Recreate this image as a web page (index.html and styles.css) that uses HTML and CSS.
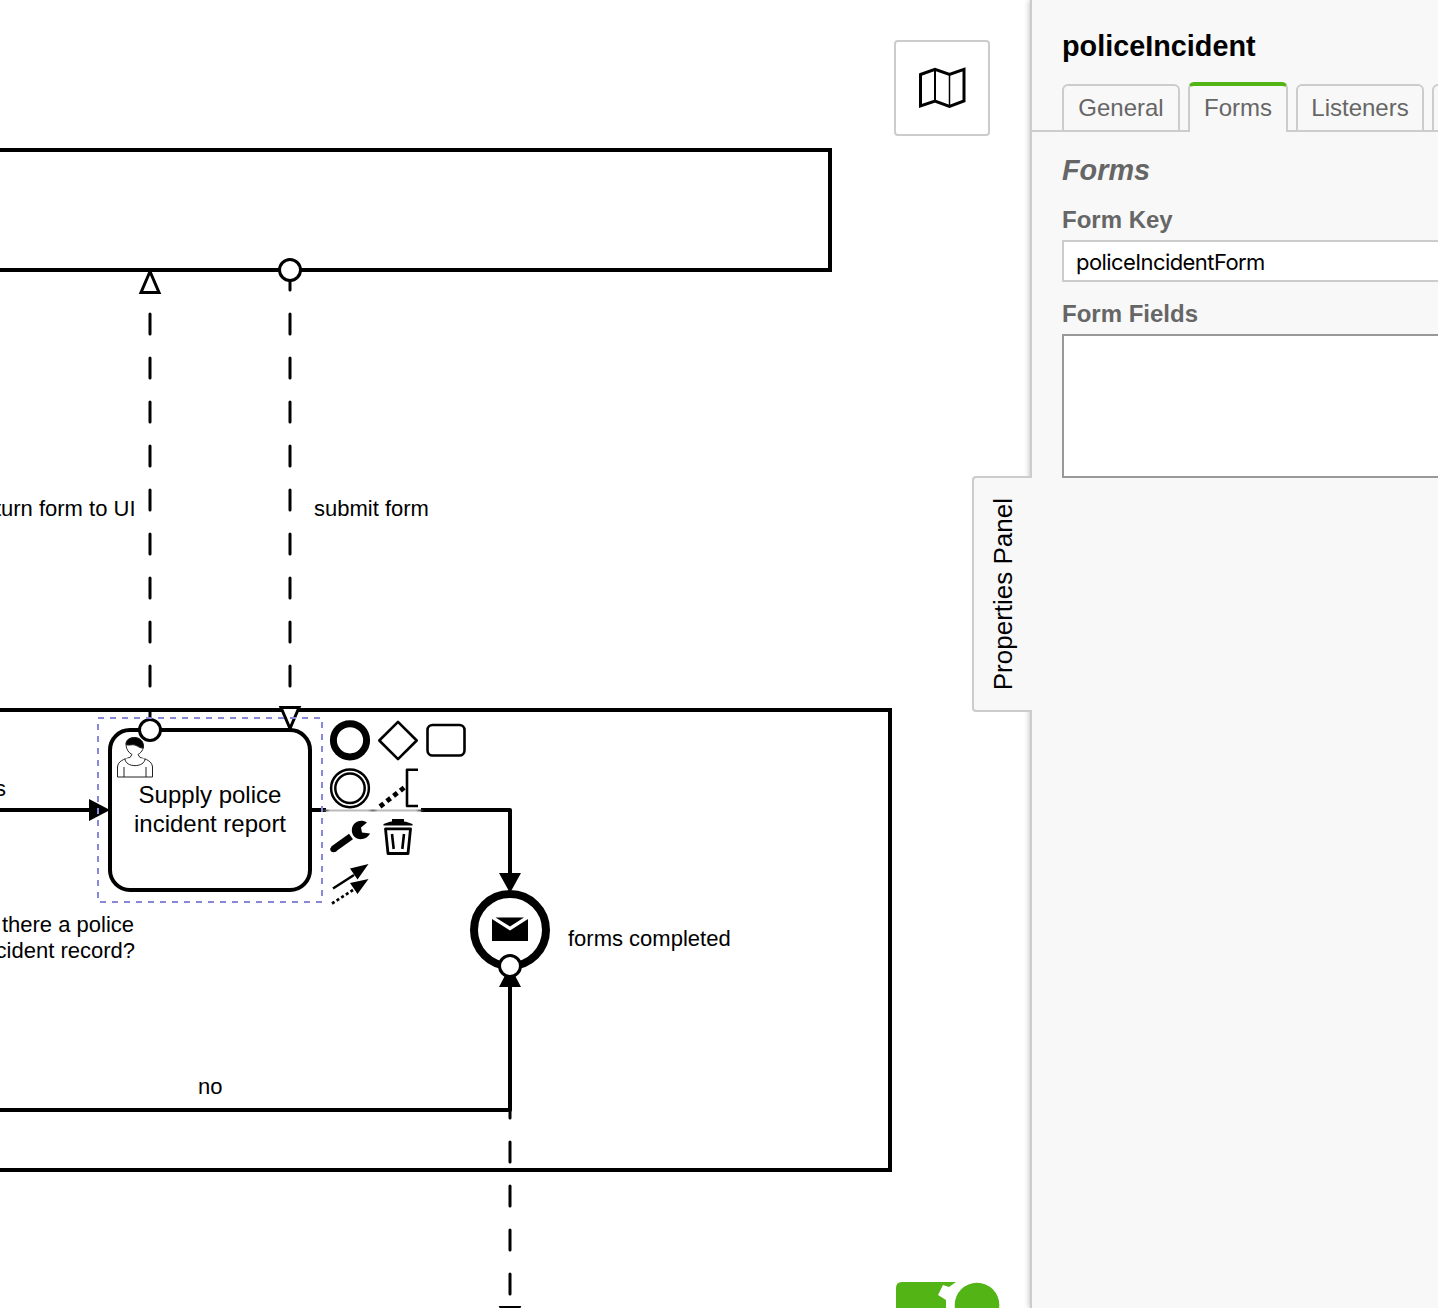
FILE: index.html
```html
<!DOCTYPE html>
<html lang="en">
<head>
<meta charset="utf-8">
<title>policeIncident</title>
<link rel="stylesheet" href="styles.css">
</head>
<body>
<div class="modeler">
  <main class="canvas">
    <svg class="diagram" width="1030" height="1308" viewBox="0 0 1030 1308">
      <defs>
        <linearGradient id="pad-line" gradientUnits="userSpaceOnUse" x1="322" x2="424" y1="0" y2="0">
          <stop offset="0" stop-color="#000"/><stop offset=".08" stop-color="#bbb"/>
          <stop offset=".45" stop-color="#bbb"/><stop offset=".5" stop-color="#666"/>
          <stop offset=".55" stop-color="#bbb"/><stop offset=".92" stop-color="#bbb"/><stop offset="1" stop-color="#000"/>
        </linearGradient>
      </defs>

      <!-- pools -->
      <g class="shape">
        <path d="M-10 150H830V270H-10M-10 710H890V1170H-10"/>
      </g>

      <!-- task and end event -->
      <rect class="shape" x="110" y="730" width="200" height="160" rx="20"/>
      <circle class="end-event" cx="510" cy="930" r="36"/>
      <path d="M495.500 917.500H524L510 926.500zM492 919L510 930.500L528 919V941H492z"/>
      <g class="user">
        <path d="M130 757.500L132 754.500C125 751 124.500 741 129 739C134 736.500 140 738 142 742C145 748 142 752 138 754.500L140 757.500C146 759 152 761 152.500 767V777H117.500V767C118 761 124 759 130 757.500z"/>
        <path d="M125 758.500C125 768 145 768 145 758.500M124 767V777M146 767V777"/>
        <path class="solid" d="M126 744.500C126 739 131 737.500 135 737.500C141 738 144 742 143.500 748C140 748.500 138 746 135 745C132 744 128 746 126 744.500z"/>
      </g>

      <!-- sequence flows -->
      <path class="flow" d="M-10 810H94M310 810H510V880M-10 1110H510V985"/>
      <path d="M89 799L110 810L89 821zM499 873H521L510 893zM499 987H521L510 966z"/>
      <path class="pad-gap" d="M326 810H421"/>
      <path d="M322 809.500H424V811.500H322z" fill="url(#pad-line)"/>

      <!-- message flows -->
      <path class="message" d="M150 730V270M290 270V730M510 966V1308"/>
      <g class="marker">
        <path d="M150 271.500L141 292.500H159zM281 707.500H299L290 728.500zM501 1307.500H519L510 1328z"/>
        <circle cx="290" cy="270" r="10.500"/><circle cx="150" cy="730" r="10.500"/><circle cx="510" cy="966" r="10.500"/>
      </g>
      <rect class="outline" x="98" y="718" width="224" height="184"/>

      <g class="label">
        <text x="135.500" y="516" text-anchor="end">return form to UI</text>
        <text x="314" y="516">submit form</text>
        <text x="6" y="796" text-anchor="end">yes</text>
        <text x="134" y="932" text-anchor="end">Is there a police</text>
        <text x="135" y="958" text-anchor="end">incident record?</text>
        <text x="198" y="1094">no</text>
        <text x="568" y="946">forms completed</text>
        <text class="task" x="210" y="803" text-anchor="middle">Supply police</text>
        <text class="task" x="210" y="832" text-anchor="middle">incident report</text>
      </g>

      <!-- context pad -->
      <g class="pad">
        <circle cx="350" cy="740.300" r="16.600" stroke-width="7"/>
        <path d="M398 721.800L416.700 740.500L398 759.200L379.300 740.500z" stroke-width="2.600"/>
        <rect x="427.500" y="725" width="37" height="30.500" rx="5" stroke-width="2.600"/>
        <circle cx="350" cy="788.300" r="18.900" stroke-width="2.500"/>
        <circle cx="350" cy="788.300" r="14.700" stroke-width="2.500"/>
        <path d="M418 769.700H407V806H418" stroke-width="2.600"/>
        <path d="M380 806.500L405 787" stroke-width="4.800" stroke-dasharray="4.800 3.800"/>
        <path d="M333.500 849L351 836.500" stroke-width="6.600"/>
        <path d="M330.200 848.500L332 846L337 851L334 852.300C331.500 852.500 330 851 330.200 848.500z" class="solid"/>
        <path d="M367 822.500L361 827.500L362 832.500L370 833.500C368 838 362 840.500 357 838.500C351 836 350.500 828 354 824C358 820 363 820 367 822.500z" class="solid"/>
        <path d="M383.500 825.500V824L390 821.800L392 821.500V819H404V821.500L406 821.800L412.500 824V825.500z" class="solid"/>
        <path d="M385.500 828.800H410.500L408 853.500H388z" stroke-width="2.800"/>
        <path d="M392 834L393.700 849M404 834L402.300 849" stroke-width="2.600"/>
        <path d="M333 888.500L354 875" stroke-width="2.500"/>
        <path d="M332 903.500L353 890" stroke-width="2.700" stroke-dasharray="3 2.500"/>
        <path d="M350 868.500L368.500 864L357.500 879.500zM350 883L368.500 879L357.500 894z" class="solid"/>
      </g>
    </svg>

    <button class="minimap" aria-label="Toggle minimap">
      <svg width="48" height="44" viewBox="0 0 48 44">
        <path d="M2.500 8.500L17 3.300L31.500 8.500L46 3.300V35L31.500 40.500L17 35L2.500 40z" fill="none" stroke="#000" stroke-width="3"/>
        <path d="M17 4V35" stroke="#000" stroke-width="2"/><path d="M31.500 8V40" stroke="#000" stroke-width="1.500"/>
      </svg>
    </button>

    <svg class="logo" width="106" height="28" viewBox="0 0 106 28">
      <path d="M0 28V8Q0 2 6 2H60L53 7L47 5L42 15L50 20V28z"/>
      <circle cx="81" cy="25" r="22.300"/>
    </svg>
  </main>

  <aside class="properties">
    <div class="toggle"><span>Properties Panel</span></div>
    <h1>policeIncident</h1>
    <nav class="tabs">
      <a class="tab general">General</a><a class="tab active">Forms</a><a class="tab listeners">Listeners</a><a class="tab more"></a>
    </nav>
    <section class="group">
      <h2>Forms</h2>
      <label>Form Key</label>
      <input class="key" value="policeIncidentForm" aria-label="Form Key">
      <label>Form Fields</label>
      <div class="fields"></div>
    </section>
  </aside>
</div>
</body>
</html>
```
FILE: styles.css
```css
* { box-sizing: border-box; }
body { margin: 0; background: #fff; font-family: "Liberation Sans", Arial, sans-serif; overflow: hidden; }
.modeler { display: flex; width: 1438px; height: 1308px; overflow: hidden; }
.canvas { position: relative; flex: 0 0 1030px; overflow: hidden; }
.diagram { display: block; }

.shape { fill: #fff; stroke: #000; stroke-width: 4; }
.end-event { fill: #fff; stroke: #000; stroke-width: 8; }
.user { fill: #fff; stroke: #222; stroke-width: 1; }
.user .solid { fill: #000; }
.flow { fill: none; stroke: #000; stroke-width: 4; stroke-linejoin: round; }
.pad-gap { stroke: #fff; stroke-width: 6; }
.message { fill: none; stroke: #000; stroke-width: 3; stroke-linecap: round; stroke-dasharray: 20 24; }
.marker { fill: #fff; stroke: #000; stroke-width: 3; }
.outline { fill: none; stroke: #8888d8; stroke-width: 2; stroke-dasharray: 6 6; }
.label { font-size: 22px; }
.label .task { font-size: 24px; }
.pad { fill: none; stroke: #000; stroke-linejoin: round; }
.pad .solid { fill: #000; stroke: none; }

.minimap {
  position: absolute; left: 894px; top: 40px;
  display: flex; align-items: center; justify-content: center;
  width: 96px; height: 96px; padding: 0;
  background: #fff; border: 2px solid #ccc; border-radius: 4px;
}
.logo { position: absolute; left: 896px; bottom: 0; fill: #52b415; }

.properties {
  position: relative; flex: 0 0 500px; height: 1308px;
  background: #f8f8f8; border-left: 2px solid #ccc;
  box-shadow: 0 0 6px rgba(0, 0, 0, .3);
}
.toggle {
  position: absolute; left: -60px; top: 476px;
  display: flex; align-items: center; justify-content: center;
  width: 60px; height: 236px;
  background: #f8f8f8; border: 2px solid #ccc; border-right: 0; border-radius: 4px 0 0 4px;
}
.toggle span { writing-mode: vertical-rl; transform: rotate(180deg); font-size: 26px; line-height: 30px; white-space: nowrap; }

h1 { margin: 0; padding: 30px 0 0 30px; font-size: 28.8px; line-height: 32px; }
.tabs { display: flex; align-items: flex-end; gap: 8px; height: 70px; padding-left: 30px; box-shadow: inset 0 -2px #ccc; }
.tab {
  height: 48px; flex: none; border: 2px solid #ccc; border-radius: 6px 6px 0 0;
  color: #666; font-size: 24px; line-height: 44px; text-align: center;
}
.general { width: 118px; }
.active { width: 100px; height: 50px; background: #f8f8f8; border-top: 4px solid #52b415; border-bottom: 0; }
.listeners { width: 128px; }
.more { width: 90px; }

.group { display: flex; flex-direction: column; padding: 22px 0 0 30px; color: #666; }
h2 { margin: 0; font-size: 28.8px; line-height: 32px; font-style: italic; }
label { font-size: 24px; font-weight: bold; line-height: 28px; margin-top: 20px; }
.key {
  height: 42px; margin: 6px 0 -2px; padding: 2px 12px 0;
  border: 2px solid #ccc; border-radius: 0; background: #fff; color: #000;
  font: 22px Inter, sans-serif; letter-spacing: -.58px;
}
.fields { height: 144px; margin-top: 6px; background: #fff; border: 2px solid #999; }
```
